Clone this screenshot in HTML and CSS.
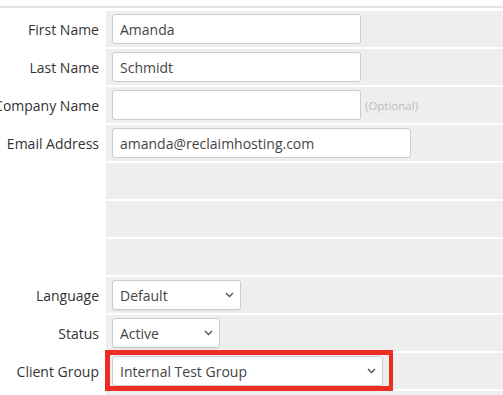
FILE: index.html
```html
<!DOCTYPE html>
<html lang="en">
<head>
<meta charset="UTF-8">
<meta name="viewport" content="width=device-width, initial-scale=1.0">
<title>Client Profile</title>
<link rel="stylesheet" href="styles.css">
</head>
<body>
<div class="topline"></div>
<div class="form">
    <div class="row">
        <div class="fieldlabel"><span>First Name</span></div>
        <div class="fieldarea"><input type="text" class="w-name" value="Amanda"></div>
    </div>
    <div class="row">
        <div class="fieldlabel"><span>Last Name</span></div>
        <div class="fieldarea"><input type="text" class="w-name" value="Schmidt"></div>
    </div>
    <div class="row">
        <div class="fieldlabel"><span>Company Name</span></div>
        <div class="fieldarea">
            <input type="text" class="w-name" value="">
            <span class="optional">(Optional)</span>
        </div>
    </div>
    <div class="row">
        <div class="fieldlabel"><span>Email Address</span></div>
        <div class="fieldarea"><input type="text" class="w-email" value="amanda@reclaimhosting.com"></div>
    </div>
    <div class="row">
        <div class="fieldlabel"></div>
        <div class="fieldarea"></div>
    </div>
    <div class="row">
        <div class="fieldlabel"></div>
        <div class="fieldarea"></div>
    </div>
    <div class="row">
        <div class="fieldlabel"></div>
        <div class="fieldarea"></div>
    </div>
    <div class="row">
        <div class="fieldlabel"><span>Language</span></div>
        <div class="fieldarea">
            <div class="select w-lang">
                <select><option>Default</option></select>
                <svg class="chevron" width="9" height="6" viewBox="0 0 9 6"><path d="M1 1l3.5 3.5L8 1" fill="none" stroke="#555" stroke-width="1.4"/></svg>
            </div>
        </div>
    </div>
    <div class="row">
        <div class="fieldlabel"><span>Status</span></div>
        <div class="fieldarea">
            <div class="select w-status">
                <select><option>Active</option></select>
                <svg class="chevron" width="9" height="6" viewBox="0 0 9 6"><path d="M1 1l3.5 3.5L8 1" fill="none" stroke="#555" stroke-width="1.4"/></svg>
            </div>
        </div>
    </div>
    <div class="row">
        <div class="fieldlabel"><span>Client Group</span></div>
        <div class="fieldarea">
            <div class="select w-group">
                <select><option>Internal Test Group</option></select>
                <svg class="chevron" width="9" height="6" viewBox="0 0 9 6"><path d="M1 1l3.5 3.5L8 1" fill="none" stroke="#555" stroke-width="1.4"/></svg>
            </div>
            <div class="callout"></div>
        </div>
    </div>
    <div class="row">
        <div class="fieldlabel"></div>
        <div class="fieldarea"></div>
    </div>
</div>
</body>
</html>
```

FILE: styles.css
```css
body {
    margin: 0;
    font-family: "Open Sans", "DejaVu Sans", sans-serif;
    font-size: 14px;
    color: #333;
    overflow: hidden;
}
.topline {
    height: 2px;
    margin-top: 6px;
    margin-bottom: 3px;
    background: #dfe5e8;
}
.form {
    display: flex;
    flex-direction: column;
    gap: 2px;
}
.row {
    display: grid;
    grid-template-columns: 106px 1fr;
    height: 36px;
}
.fieldlabel {
    display: flex;
    align-items: center;
    justify-content: flex-end;
    padding-right: 7px;
    white-space: nowrap;
}
.fieldarea {
    position: relative;
    display: flex;
    align-items: center;
    padding-left: 6px;
    background: #eeeeee;
}
input, select {
    box-sizing: border-box;
    height: 30px;
    border: 1px solid #cccccc;
    border-radius: 3px;
    padding: 0 7px;
    font-family: inherit;
    font-size: 14px;
    color: #444;
    background: #fff;
    margin: 0;
}
.w-name {
    width: 249px;
}
.w-email {
    width: 299px;
}
.optional {
    margin-left: 4px;
    font-size: 11.5px;
    color: #bbbbbb;
}
.select {
    position: relative;
    display: flex;
}
.select select {
    width: 100%;
    appearance: none;
    -webkit-appearance: none;
    box-shadow: 0 1px 1px rgba(0, 0, 0, 0.06);
}
.chevron {
    position: absolute;
    right: 7px;
    top: 12px;
    pointer-events: none;
}
.w-lang {
    width: 129px;
}
.w-status {
    width: 108px;
}
.w-group {
    width: 271px;
}
.callout {
    position: absolute;
    left: -1px;
    top: -3px;
    width: 288px;
    height: 41px;
    box-sizing: border-box;
    border: 5px solid #ee2c24;
    border-right-width: 4px;
}
```
